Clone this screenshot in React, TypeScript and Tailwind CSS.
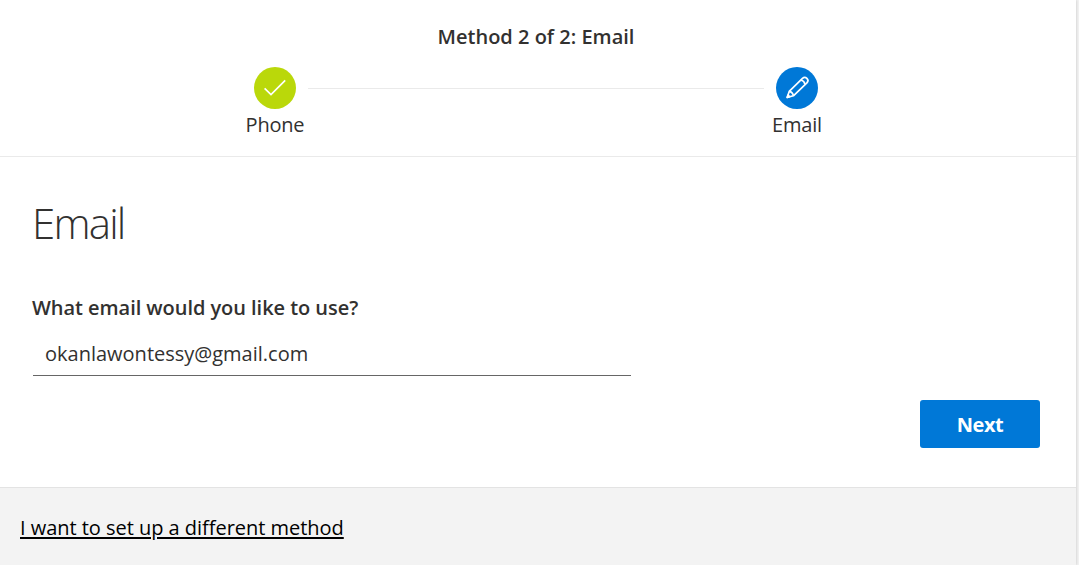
import React from "react";

function CheckIcon() {
  return (
    <svg width="42" height="42" viewBox="0 0 42 42" fill="none" stroke="white" strokeWidth="1.7">
      <path d="M10.6 21.3 L17 27.6 L31.2 13.4" />
    </svg>
  );
}

function PencilIcon() {
  return (
    <svg width="42" height="42" viewBox="0 0 42 42" fill="none" stroke="white" strokeWidth="1.7" strokeLinejoin="round">
      <path d="M11.2 30.4 L13.2 24.4 L26.5 11.4 A3.05 3.05 0 0 1 30.9 15.8 L17.4 28.8 Z" />
      <path d="M13.2 24.4 Q16.8 25 17.4 28.8" />
      <path d="M24.8 13 Q28.4 13.8 29 17.4" />
      <path d="M11.2 30.4 L12 28 L13.6 29.7 Z" fill="white" />
    </svg>
  );
}

function Step({ label, color, children }: { label: string; color: string; children: React.ReactNode }) {
  return (
    <div className="flex w-[66px] flex-col items-center">
      <div className={`h-[42px] w-[42px] rounded-full ${color}`}>{children}</div>
      <span className="mt-0.5 text-[20px] leading-7 tracking-[-0.2px]">{label}</span>
    </div>
  );
}

export default function App() {
  return (
    <div className="h-[565px] w-full overflow-hidden bg-[#f2f2f2] pr-[3px] font-['Open_Sans',sans-serif] text-[#323130]">
      <main className="flex h-full flex-col bg-white shadow-[0_0_3px_rgba(0,0,0,0.2)]">
        <header className="h-[157px] shrink-0 border-b border-[#eaeaea] pt-[23px]">
          <h2 className="pr-1 text-center text-[20px] leading-7 font-semibold">Method 2 of 2: Email</h2>
          <div className="mt-4 flex pl-[242px]">
            <Step label="Phone" color="bg-[#bad80a]">
              <CheckIcon />
            </Step>
            <div className="mt-[21px] h-px w-[456px] bg-[#eaeaea]" />
            <Step label="Email" color="bg-[#0078d7]">
              <PencilIcon />
            </Step>
          </div>
        </header>

        <section className="flex grow flex-col px-[33px] pt-[38px]">
          <h1 className="-ml-px text-[42px] leading-[56px] font-light tracking-[-1.8px]">Email</h1>
          <label htmlFor="email" className="mt-[43px] -ml-px text-[20px] leading-7 font-semibold tracking-[-0.05px]">
            What email would you like to use?
          </label>
          <input
            id="email"
            type="text"
            defaultValue="okanlawontessy@gmail.com"
            className="mt-[10px] h-[44px] w-[598px] border-b border-[#666666] px-3 text-[20px] outline-none"
          />
          <button className="mt-6 mr-[3px] h-12 w-[120px] self-end rounded-[3px] bg-[#0078d7] pt-0.5 text-[20px] font-bold tracking-[-0.5px] text-white">
            Next
          </button>
        </section>

        <footer className="h-[78px] shrink-0 border-t border-[#e3e3e3] bg-[#f3f3f3] pt-[26px] pl-5">
          <a href="#" className="block w-fit text-[20px] leading-7 tracking-[-0.03px] text-black underline decoration-2 underline-offset-2">
            I want to set up a different method
          </a>
        </footer>
      </main>
    </div>
  );
}
